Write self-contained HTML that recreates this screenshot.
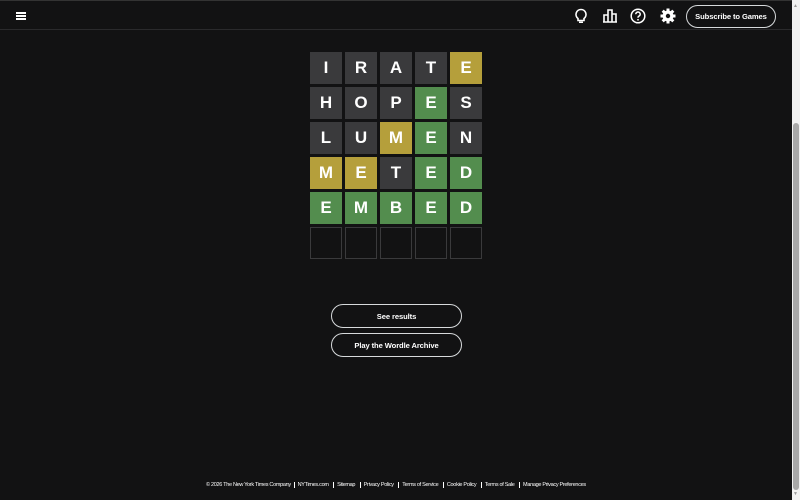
<!DOCTYPE html>
<html><head><meta charset="utf-8"><style>
*{box-sizing:border-box;margin:0;padding:0}
html,body{width:800px;height:500px;overflow:hidden;background:#121213;font-family:"Liberation Sans",Arial,sans-serif;color:#fff}
.hdr{position:absolute;left:0;top:0;width:792px;height:30px;border-bottom:1px solid #2a2a2c;border-top:1px solid #333}
.sb{position:absolute;left:792px;top:0;width:8px;height:500px;background:#f1f1f1}
.thumb{position:absolute;left:1px;top:123px;width:6px;height:367px;background:#a8a8a8;border-radius:3px}
.tile{position:absolute;width:32px;height:32px;display:flex;align-items:center;justify-content:center;font-weight:bold;font-size:17px}
.g{background:#3a3a3c}.y{background:#b59f3b}.gr{background:#538d4e}.e{border:1px solid #3a3a3c}
.btn{position:absolute;left:331px;width:131px;height:24px;border:1px solid #d7dadc;border-radius:12px;display:flex;align-items:center;justify-content:center;font-size:7.6px;font-weight:bold;letter-spacing:-0.1px}
.sub{position:absolute;left:686px;top:4px;width:90px;height:23px;border:1px solid #d7dadc;border-radius:12px;display:flex;align-items:center;justify-content:center;font-size:7.6px;font-weight:bold;letter-spacing:-0.1px}
.ft{position:absolute;top:482px;left:206px;font-size:5.5px;letter-spacing:-0.3px;color:#fff;white-space:nowrap}
.ft span{border-left:1px solid #fff;padding:0 3px;margin-left:1.5px}
</style></head><body>
<div class="hdr">
<div style="position:absolute;left:16px;top:11px;width:10px;height:2px;background:#fff;box-shadow:0 3px 0 #fff,0 6px 0 #fff"></div>
<svg style="position:absolute;left:574px;top:7px" width="14" height="16" viewBox="0 0 14 16"><path d="M7 1.5a5 5 0 0 0-3 9v2h6v-2a5 5 0 0 0-3-9z" fill="none" stroke="#fff" stroke-width="1.6"/><rect x="5" y="13.5" width="4" height="1.5" fill="#fff"/></svg>
<svg style="position:absolute;left:602px;top:8px" width="16" height="14" viewBox="0 0 16 14"><path d="M1 13h14M2 13V6h4v7M6 13V1h4v12M10 13V5h4v8" fill="none" stroke="#fff" stroke-width="1.6"/></svg>
<svg style="position:absolute;left:630px;top:7px" width="16" height="16" viewBox="0 0 16 16"><circle cx="8" cy="8" r="6.8" fill="none" stroke="#fff" stroke-width="1.5"/><path d="M5.8 6.2a2.2 2.2 0 1 1 3 2c-.7.3-.8.8-.8 1.6" fill="none" stroke="#fff" stroke-width="1.5"/><circle cx="8" cy="11.8" r="0.9" fill="#fff"/></svg>
<svg style="position:absolute;left:660px;top:7px" width="16" height="16" viewBox="0 0 16 16"><g fill="#fff"><circle cx="8" cy="8" r="5.5"/><rect x="6.5" y="0.5" width="3" height="15"/><rect x="0.5" y="6.5" width="15" height="3"/><rect x="6.5" y="0.5" width="3" height="15" transform="rotate(45 8 8)"/><rect x="6.5" y="0.5" width="3" height="15" transform="rotate(-45 8 8)"/></g><circle cx="8" cy="8" r="2.2" fill="#121213"/></svg>
<div class="sub">Subscribe to Games</div>
</div>
<div class="sb"><div class="thumb"></div><div style="position:absolute;left:1px;top:3px;color:#999;font-size:5px">▲</div><div style="position:absolute;left:1px;top:491px;color:#999;font-size:5px">▼</div></div>

<div class="tile g" style="left:310px;top:52px">I</div>
<div class="tile g" style="left:345px;top:52px">R</div>
<div class="tile g" style="left:380px;top:52px">A</div>
<div class="tile g" style="left:415px;top:52px">T</div>
<div class="tile y" style="left:450px;top:52px">E</div>

<div class="tile g" style="left:310px;top:87px">H</div>
<div class="tile g" style="left:345px;top:87px">O</div>
<div class="tile g" style="left:380px;top:87px">P</div>
<div class="tile gr" style="left:415px;top:87px">E</div>
<div class="tile g" style="left:450px;top:87px">S</div>

<div class="tile g" style="left:310px;top:122px">L</div>
<div class="tile g" style="left:345px;top:122px">U</div>
<div class="tile y" style="left:380px;top:122px">M</div>
<div class="tile gr" style="left:415px;top:122px">E</div>
<div class="tile g" style="left:450px;top:122px">N</div>

<div class="tile y" style="left:310px;top:157px">M</div>
<div class="tile y" style="left:345px;top:157px">E</div>
<div class="tile g" style="left:380px;top:157px">T</div>
<div class="tile gr" style="left:415px;top:157px">E</div>
<div class="tile gr" style="left:450px;top:157px">D</div>

<div class="tile gr" style="left:310px;top:192px">E</div>
<div class="tile gr" style="left:345px;top:192px">M</div>
<div class="tile gr" style="left:380px;top:192px">B</div>
<div class="tile gr" style="left:415px;top:192px">E</div>
<div class="tile gr" style="left:450px;top:192px">D</div>

<div class="tile e" style="left:310px;top:227px"></div>
<div class="tile e" style="left:345px;top:227px"></div>
<div class="tile e" style="left:380px;top:227px"></div>
<div class="tile e" style="left:415px;top:227px"></div>
<div class="tile e" style="left:450px;top:227px"></div>

<div class="btn" style="top:304px">See results</div>
<div class="btn" style="top:333px">Play the Wordle Archive</div>

<div class="ft">© 2026 The New York Times Company <span>NYTimes.com</span><span>Sitemap</span><span>Privacy Policy</span><span>Terms of Service</span><span>Cookie Policy</span><span>Terms of Sale</span><span>Manage Privacy Preferences</span></div>
</body></html>
